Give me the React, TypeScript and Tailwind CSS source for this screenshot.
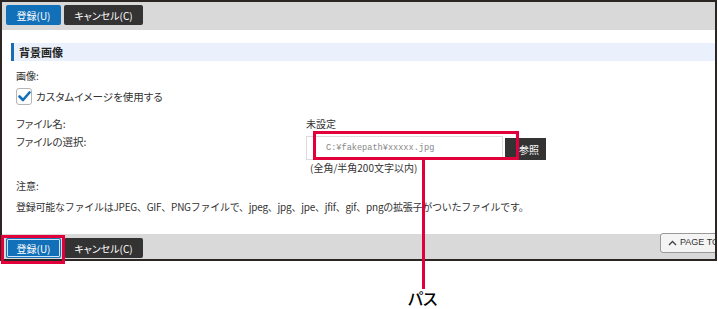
import React from "react";

const jp = "font-['Noto_Sans_CJK_JP','Noto_Sans',sans-serif] [font-feature-settings:'palt']";

function BlueBtn({ focus }: { focus?: boolean }) {
  return (
    <div
      className={`w-[55px] h-[20px] rounded-[2px] bg-[#1270b8] text-white text-[10px] flex items-center justify-center ${
        focus ? "outline outline-1 outline-[#cfe3f5] -outline-offset-2" : ""
      }`}
    >
      登録(U)
    </div>
  );
}

function DarkBtn() {
  return (
    <div className="w-[79px] h-[20px] rounded-[2px] bg-[#333333] text-white text-[10px] flex items-center justify-center">
      キャンセル(C)
    </div>
  );
}

export default function App() {
  return (
    <div className={`w-[718px] h-[309px] bg-white relative overflow-hidden text-[#333] ${jp}`}>
      <div className="w-[717px] h-[261px] border-2 border-[#2b2624] relative overflow-hidden flex flex-col">
        {/* top bar */}
        <div className="h-[28px] bg-[#d9d9d9] flex items-start gap-[3px] pl-[4px] pt-[3px] shrink-0">
          <BlueBtn />
          <DarkBtn />
        </div>
        {/* content */}
        <div className="flex-1 flex flex-col">
          <div className="mt-[13px] ml-[9px] h-[18px] bg-[#eaf1fc] border-l-[3px] border-[#1a6db4] flex items-center pl-[5px] text-[11px] font-bold text-[#222]">
            背景画像
          </div>
          <div className="pl-[14px] text-[10px]">
            <div className="mt-[7px] h-[16px] leading-[16px]">画像:</div>
            <div className="mt-[4px] h-[17px] flex items-center gap-[4px]">
              <div className="w-[16px] h-[17px] rounded-[3px] border border-[#b5b5b5] bg-white flex items-center justify-center">
                <svg width="13" height="11" viewBox="0 0 13 11">
                  <path d="M1.5 5.5 L5 9 L11.5 1.5" fill="none" stroke="#1570b8" strokeWidth="2.6" strokeLinecap="round" strokeLinejoin="round" />
                </svg>
              </div>
              <span className="text-[10.5px]">カスタムイメージを使用する</span>
            </div>
            <div className="mt-[11px] flex h-[16px] leading-[16px]">
              <div className="w-[290px] text-[10.5px]">ファイル名:</div>
              <div>未設定</div>
            </div>
            <div className="mt-[2px] flex">
              <div className="w-[290px] h-[16px] leading-[16px] text-[10.5px]">ファイルの選択:</div>
              <div className="flex flex-col">
                <div className="mt-[2px] flex items-end">
                  <div className="w-[197px] h-[24px] border border-[#dcdcdc] bg-white flex items-center pl-[19px] font-['Liberation_Mono',monospace] text-[8.6px] text-[#888]">
                    C:¥fakepath¥xxxxx.jpg
                  </div>
                  <div className="ml-[2px] w-[41px] h-[22px] bg-[#333333] text-white text-[10px] flex items-center justify-end pr-[7px]">
                    参照
                  </div>
                </div>
                <div className="h-[16px] leading-[16px] ml-[4px] [font-feature-settings:normal]">(全角/半角200文字以内)</div>
              </div>
            </div>
            <div className="mt-[2px] h-[16px] leading-[16px]">注意:</div>
            <div className="mt-[5px] h-[16px] leading-[16px] whitespace-nowrap tracking-[-0.25px] [font-feature-settings:normal]">
              登録可能なファイルはJPEG、GIF、PNGファイルで、jpeg、jpg、jpe、jfif、gif、pngの拡張子がついたファイルです。
            </div>
          </div>
        </div>
        {/* bottom bar */}
        <div className="h-[25px] bg-[#d9d9d9] flex items-start gap-[3px] pl-[4px] pt-[4px] shrink-0">
          <BlueBtn focus />
          <DarkBtn />
        </div>
        {/* page top */}
        <div className="absolute left-[658px] top-[231px] w-[70px] h-[20px] rounded-[3px] border border-[#9a9a9a] bg-[#f4f4f4] flex items-center pl-[7px] gap-[3px] font-['Liberation_Sans',sans-serif] text-[9px] text-[#333]">
          <svg width="9" height="6" viewBox="0 0 9 6">
            <path d="M1 5 L4.5 1.5 L8 5" fill="none" stroke="#444" strokeWidth="1.4" />
          </svg>
          <span>PAGE TOP</span>
        </div>
      </div>

      {/* annotations */}
      <div className="absolute left-[313px] top-[131px] w-[206px] h-[29px] border-[3px] border-[#e2003b]" />
      <div className="absolute left-[422px] top-[160px] w-[3px] h-[129px] bg-[#e2003b]" />
      <div className="absolute left-[1px] top-[235px] w-[64px] h-[29px] border-[3px] border-[#e2003b]" />
      <div className="absolute left-[408px] top-[288px] text-[16px] font-medium text-black leading-[20px]">パス</div>
    </div>
  );
}
